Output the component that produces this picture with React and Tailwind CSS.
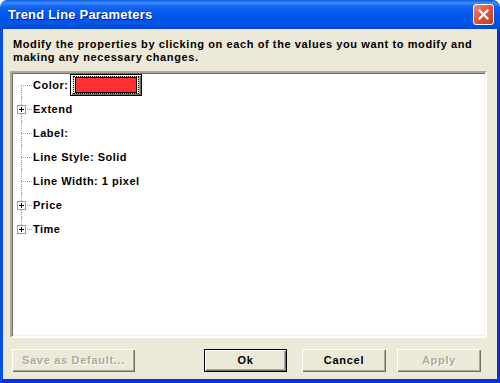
import React from 'react';

const items = [
  { label: 'Color:', expand: false, swatch: true },
  { label: 'Extend', expand: true },
  { label: 'Label:', expand: false },
  { label: 'Line Style: Solid', expand: false },
  { label: 'Line Width: 1 pixel', expand: false },
  { label: 'Price', expand: true },
  { label: 'Time', expand: true },
];

const font = { fontFamily: '"Liberation Sans", Arial, sans-serif' };

const TreeRow = ({ item, first, last }) => (
  <div className="flex items-center h-[24px]">
    <div className="relative w-[21px] h-full shrink-0">
      <div
        className={
          'absolute left-[9px] w-0 border-l border-dotted border-[#a0a0a0] ' +
          (first ? 'top-[12px] bottom-0' : last ? 'top-0 h-[12px]' : 'top-0 bottom-0')
        }
      />
      <div className="absolute left-[9px] top-[12px] w-[11px] h-0 border-t border-dotted border-[#a0a0a0]" />
      {item.expand && (
        <div className="absolute left-[5px] top-[8px] w-[9px] h-[9px] border border-[#919b9c] bg-white flex items-center justify-center">
          <svg width="7" height="7" viewBox="0 0 7 7">
            <rect x="1" y="3" width="5" height="1" fill="#000" />
            <rect x="3" y="1" width="1" height="5" fill="#000" />
          </svg>
        </div>
      )}
    </div>
    <span className="text-[11px] font-bold tracking-[0.5px] text-black whitespace-nowrap">{item.label}</span>
    {item.swatch && (
      <div className="ml-[2px] w-[72px] h-[22px] border border-black bg-[#ece9d8] shadow-[inset_1px_1px_#fff,inset_-1px_-1px_#716f64,inset_-2px_-2px_#aca899] px-[2px] py-[1px]">
        <div className="w-full h-full border border-dotted border-black px-[1px]">
          <div className="w-full h-full border border-black bg-[#ff3030]" />
        </div>
      </div>
    )}
  </div>
);

const Btn = ({ children, disabled, isDefault, className }) => (
  <div
    className={
      'h-[23px] flex items-center justify-center text-[11px] font-bold tracking-[0.7px] bg-[#ece9d8] ' +
      (isDefault
        ? 'border border-black shadow-[inset_1px_1px_#fff,inset_-1px_-1px_#716f64,inset_-2px_-2px_#aca899] '
        : 'shadow-[inset_1px_1px_#fff,inset_-1px_-1px_#716f64,inset_-2px_-2px_#aca899] ') +
      (disabled ? 'text-[#aca899] [text-shadow:1px_1px_#fff] ' : 'text-black ') +
      className
    }
  >
    {children}
  </div>
);

export default function App() {
  return (
    <div className="w-[500px] h-[383px] flex flex-col bg-white" style={font}>
      <div className="h-[29px] shrink-0 rounded-t-[7px] bg-[linear-gradient(to_bottom,#0a5ae6_0%,#3d8cf7_10%,#1466f0_22%,#0058ee_45%,#0055e8_80%,#0046d4_100%)] flex items-center pl-[8px] pr-[6px]">
        <span className="text-white font-bold text-[13px] tracking-[0.2px] [text-shadow:1px_1px_#0a1c8a] flex-1">Trend Line Parameters</span>
        <div className="w-[21px] h-[21px] rounded-[3px] border border-white bg-[linear-gradient(135deg,#f08a6c_0%,#e2583e_45%,#c4381e_100%)] flex items-center justify-center">
          <svg width="11" height="11" viewBox="0 0 11 11">
            <path d="M1.5 1.5 L9.5 9.5 M9.5 1.5 L1.5 9.5" stroke="#fff" strokeWidth="2.2" strokeLinecap="square" />
          </svg>
        </div>
      </div>
      <div className="flex-1 flex flex-col bg-[#ece9d8] border-l-[3px] border-r-[3px] border-b-[4px] border-l-[#0a4fdf] border-r-[#0831d9] border-b-[#0831d9] pt-[9px] px-[7px] pb-[7px]">
        <div className="pl-[3px] w-[470px] text-[11px] leading-[13px] font-bold tracking-[0.6px] text-black h-[26px]">
          Modify the properties by clicking on each of the values you want to modify and making any necessary changes.
        </div>
        <div className="mt-[7px] w-[477px] h-[267px] bg-white border-2 border-t-[#aca899] border-l-[#aca899] border-b-white border-r-white shadow-[inset_1px_1px_#716f64,inset_-1px_-1px_#f1efe2]">
          <div>
            {items.map((it, i) => (
              <TreeRow key={i} item={it} first={i === 0} last={i === items.length - 1} />
            ))}
          </div>
        </div>
        <div className="mt-[11px] flex">
          <Btn disabled className="ml-[2px] w-[123px]">Save as Default...</Btn>
          <Btn isDefault className="ml-[69px] w-[83px]">Ok</Btn>
          <Btn className="ml-[15px] w-[84px]">Cancel</Btn>
          <Btn disabled className="ml-[11px] w-[84px]">Apply</Btn>
        </div>
      </div>
    </div>
  );
}
